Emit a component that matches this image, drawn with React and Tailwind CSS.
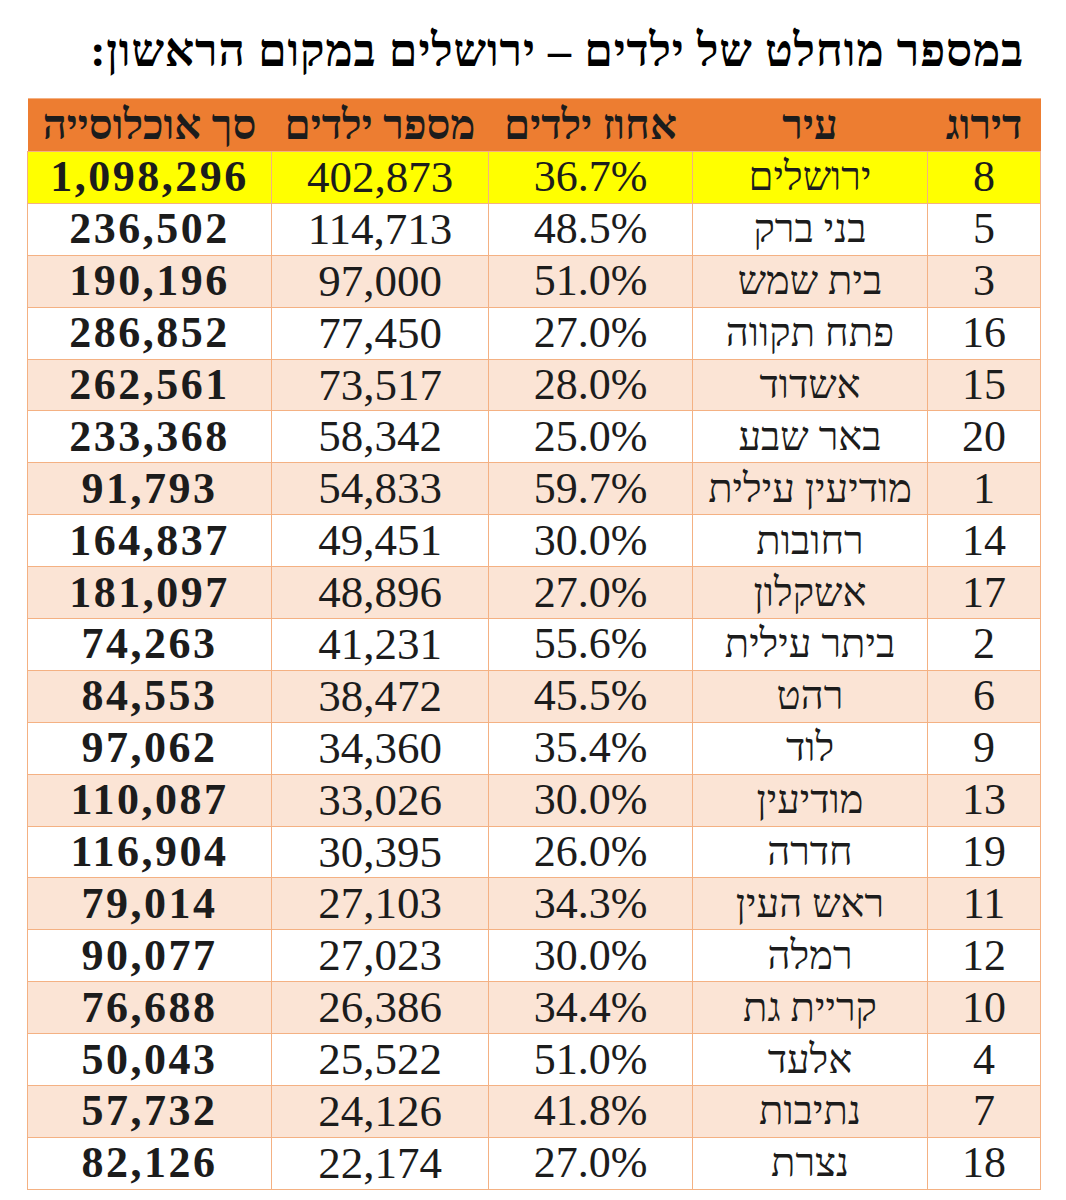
const rows = [
  ['8', 'ירושלים', '36.7%', '402,873', '1,098,296'],
  ['5', 'בני ברק', '48.5%', '114,713', '236,502'],
  ['3', 'בית שמש', '51.0%', '97,000', '190,196'],
  ['16', 'פתח תקווה', '27.0%', '77,450', '286,852'],
  ['15', 'אשדוד', '28.0%', '73,517', '262,561'],
  ['20', 'באר שבע', '25.0%', '58,342', '233,368'],
  ['1', 'מודיעין עילית', '59.7%', '54,833', '91,793'],
  ['14', 'רחובות', '30.0%', '49,451', '164,837'],
  ['17', 'אשקלון', '27.0%', '48,896', '181,097'],
  ['2', 'ביתר עילית', '55.6%', '41,231', '74,263'],
  ['6', 'רהט', '45.5%', '38,472', '84,553'],
  ['9', 'לוד', '35.4%', '34,360', '97,062'],
  ['13', 'מודיעין', '30.0%', '33,026', '110,087'],
  ['19', 'חדרה', '26.0%', '30,395', '116,904'],
  ['11', 'ראש העין', '34.3%', '27,103', '79,014'],
  ['12', 'רמלה', '30.0%', '27,023', '90,077'],
  ['10', 'קריית גת', '34.4%', '26,386', '76,688'],
  ['4', 'אלעד', '51.0%', '25,522', '50,043'],
  ['7', 'נתיבות', '41.8%', '24,126', '57,732'],
  ['18', 'נצרת', '27.0%', '22,174', '82,126'],
]

const headers = ['דירוג', 'עיר', 'אחוז ילדים', 'מספר ילדים', 'סך אוכלוסייה']

function rowBg(i) {
  if (i === 0) return 'bg-[#ffff00]'
  return i % 2 === 0 ? 'bg-[#fbe4d5]' : 'bg-white'
}

export default function App() {
  return (
    <div dir="rtl" className="w-[1066px] h-[1200px] bg-white text-[#1c1c1c] font-['Liberation_Serif','DejaVu_Serif','DejaVu_Sans',serif]">
      <div className="h-[98px] pr-[42px] pt-[25px]">
        <h1 className="text-[46px] leading-[52px] font-bold tracking-[0.8px] text-black">במספר מוחלט של ילדים – ירושלים במקום הראשון:</h1>
      </div>
      <table className="mr-[25px] w-[1013px] table-fixed border-collapse">
        <colgroup>
          <col className="w-[113px]" />
          <col className="w-[235px]" />
          <col className="w-[204px]" />
          <col className="w-[217px]" />
          <col className="w-[244px]" />
        </colgroup>
        <thead>
          <tr className="h-[53px] bg-[#ed7d31]">
            {headers.map((h) => (
              <th key={h} className="text-[42px] leading-none font-bold text-center p-0 border-y border-[#f4b183]">{h}</th>
            ))}
          </tr>
        </thead>
        <tbody>
          {rows.map((r, i) => (
            <tr key={r[0]} className={`h-[51.9px] ${rowBg(i)}`}>
              <td className="p-0 text-center text-[44px] leading-none border border-[#f4b183]">{r[0]}</td>
              <td className="p-0 text-center text-[40px] leading-none border border-[#f4b183]">{r[1]}</td>
              <td className="p-0 text-center text-[44px] leading-none border border-[#f4b183]">{r[2]}</td>
              <td className="p-0 text-center text-[45px] leading-none border border-[#f4b183]">{r[3]}</td>
              <td className="p-0 text-center text-[44px] leading-none font-bold tracking-[2.5px] border border-[#f4b183]">{r[4]}</td>
            </tr>
          ))}
        </tbody>
      </table>
    </div>
  )
}
